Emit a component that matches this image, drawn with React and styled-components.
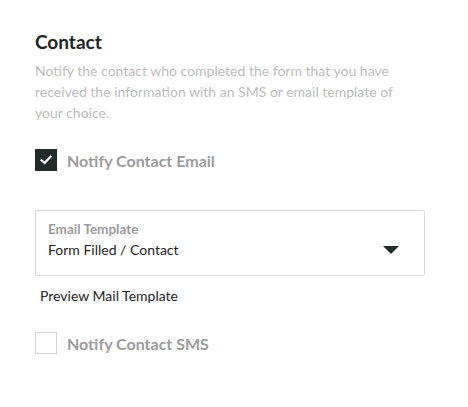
import React, { useState } from 'react';
import styled, { createGlobalStyle } from 'styled-components';

const GlobalStyle = createGlobalStyle`
  body {
    margin: 0;
    background: #ffffff;
    font-family: Lato, 'Liberation Sans', sans-serif;
  }
`;

const Page = styled.div`
  width: 468px;
  height: 407px;
  padding: 31px 43px 0 35px;
  box-sizing: border-box;
`;

const Title = styled.h2`
  margin: 0;
  font-size: 19px;
  font-weight: 700;
  line-height: 22px;
  color: #1f2424;
`;

const Description = styled.p`
  margin: 7px 0 0;
  max-width: 380px;
  font-size: 14px;
  line-height: 21px;
  color: #bdbdbd;
`;

const CheckRow = styled.label`
  display: flex;
  align-items: center;
  gap: 10px;
  margin-top: ${(p) => p.$top}px;
  cursor: pointer;
`;

const Box = styled.span`
  width: 22px;
  height: 22px;
  box-sizing: border-box;
  display: flex;
  align-items: center;
  justify-content: center;
  background: ${(p) => (p.$checked ? '#232a2a' : '#ffffff')};
  border: 1px solid ${(p) => (p.$checked ? '#232a2a' : '#d4d4d4')};
`;

const CheckLabel = styled.span`
  font-size: 16px;
  font-weight: 700;
  line-height: 19px;
  color: #9b9b9b;
`;

const Select = styled.div`
  margin-top: 39px;
  height: 66px;
  box-sizing: border-box;
  border: 1px solid #d8d8d8;
  border-radius: 2px;
  padding: 10px 25px 0 12px;
  display: flex;
  align-items: flex-start;
  justify-content: space-between;
`;

const SelectText = styled.div`
  display: flex;
  flex-direction: column;
`;

const SelectLabel = styled.span`
  font-size: 13.5px;
  font-weight: 700;
  line-height: 16px;
  color: #9b9b9b;
`;

const SelectValue = styled.span`
  margin-top: 4px;
  font-size: 14px;
  line-height: 18px;
  color: #1f2424;
`;

const Arrow = styled.span`
  width: 0;
  height: 0;
  margin-top: 25px;
  border-left: 8.5px solid transparent;
  border-right: 8.5px solid transparent;
  border-top: 8px solid #232a2a;
`;

const PreviewLink = styled.a`
  display: block;
  margin: 11px 0 0 5px;
  font-size: 14px;
  line-height: 18px;
  color: #1f2424;
  cursor: pointer;
`;

const Check = () => (
  <svg width="14" height="14" viewBox="0 0 14 14">
    <path d="M2.5 7.2 L5.6 10 L11.5 3.8" fill="none" stroke="#ffffff" strokeWidth="2.2" strokeLinecap="square" />
  </svg>
);

const App = () => {
  const [email, setEmail] = useState(true);
  const [sms, setSms] = useState(false);

  return (
    <Page>
      <GlobalStyle />
      <Title>Contact</Title>
      <Description>
        Notify the contact who completed the form that you have received the information with an SMS or email template of
        your choice.
      </Description>

      <CheckRow $top={26} onClick={() => setEmail(!email)}>
        <Box $checked={email}>{email && <Check />}</Box>
        <CheckLabel>Notify Contact Email</CheckLabel>
      </CheckRow>

      <Select>
        <SelectText>
          <SelectLabel>Email Template</SelectLabel>
          <SelectValue>Form Filled / Contact</SelectValue>
        </SelectText>
        <Arrow />
      </Select>

      <PreviewLink>Preview Mail Template</PreviewLink>

      <CheckRow $top={27} onClick={() => setSms(!sms)}>
        <Box $checked={sms}>{sms && <Check />}</Box>
        <CheckLabel>Notify Contact SMS</CheckLabel>
      </CheckRow>
    </Page>
  );
};

export default App;
